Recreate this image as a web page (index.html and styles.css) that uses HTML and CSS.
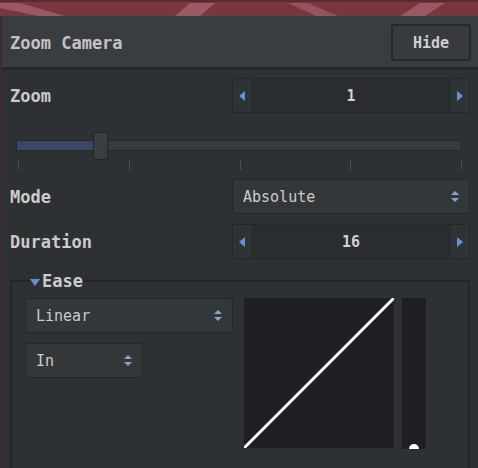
FILE: index.html
```html
<!DOCTYPE html>
<html>
<head>
<meta charset="utf-8">
<link rel="stylesheet" href="styles.css">
</head>
<body>
<div class="banner">
  <svg width="478" height="16" viewBox="0 0 478 16">
    <rect x="0" y="0" width="478" height="16" fill="#7a363d"/>
    <polygon points="0,3 20,3 65,16 38,16 0,8" fill="#9b5864"/>
    <polygon points="190,3 215,3 200,16 175,16" fill="#9c5a65"/>
    <polygon points="288,3 308,3 338,16 316,16" fill="#96525d"/>
    <polygon points="420,3 445,3 425,16 400,16" fill="#9a5863"/>
    <rect x="0" y="0" width="478" height="2" fill="#5c2a30"/>
  </svg>
</div>
<div class="panel">
  <div class="header">
    <span class="title">Zoom Camera</span>
    <button class="btn">Hide</button>
  </div>
  <div class="content">
    <div class="row">
      <span class="label">Zoom</span>
      <div class="spin">
        <span class="spin-arrow"><svg width="6" height="10" viewBox="0 0 6 10"><polygon points="6,0 6,10 0,5" fill="#5e93dc"/></svg></span>
        <span class="spin-value">1</span>
        <span class="spin-arrow"><svg width="6" height="10" viewBox="0 0 6 10"><polygon points="0,0 0,10 6,5" fill="#5e93dc"/></svg></span>
      </div>
    </div>
    <div class="slider">
      <div class="track">
        <div class="fill"></div>
        <div class="handle"></div>
      </div>
      <div class="ticks"><i></i><i></i><i></i><i></i><i></i></div>
    </div>
    <div class="row">
      <span class="label">Mode</span>
      <div class="select">
        <span>Absolute</span>
        <svg class="updown" width="8" height="13" viewBox="0 0 8 13"><polygon points="0,5 4,1 8,5" fill="#8aa4c8"/><polygon points="0,8 4,12 8,8" fill="#8aa4c8"/></svg>
      </div>
    </div>
    <div class="row row-dur">
      <span class="label">Duration</span>
      <div class="spin">
        <span class="spin-arrow"><svg width="6" height="10" viewBox="0 0 6 10"><polygon points="6,0 6,10 0,5" fill="#5e93dc"/></svg></span>
        <span class="spin-value">16</span>
        <span class="spin-arrow"><svg width="6" height="10" viewBox="0 0 6 10"><polygon points="0,0 0,10 6,5" fill="#5e93dc"/></svg></span>
      </div>
    </div>
    <fieldset class="group">
      <legend class="legend"><svg width="10" height="7" viewBox="0 0 10 7"><polygon points="0,0 10,0 5,7" fill="#5e93dc"/></svg>Ease</legend>
      <div class="group-inner">
        <div class="selects">
          <div class="select">
            <span>Linear</span>
            <svg class="updown" width="8" height="13" viewBox="0 0 8 13"><polygon points="0,5 4,1 8,5" fill="#8aa4c8"/><polygon points="0,8 4,12 8,8" fill="#8aa4c8"/></svg>
          </div>
          <div class="select select-small">
            <span>In</span>
            <svg class="updown" width="8" height="13" viewBox="0 0 8 13"><polygon points="0,5 4,1 8,5" fill="#8aa4c8"/><polygon points="0,8 4,12 8,8" fill="#8aa4c8"/></svg>
          </div>
        </div>
        <div class="graph">
          <svg width="150" height="150" viewBox="0 0 150 150"><line x1="0" y1="150" x2="150" y2="0" stroke="#ffffff" stroke-width="3"/></svg>
        </div>
        <div class="bar"><span class="knob"></span></div>
      </div>
    </fieldset>
  </div>
</div>
</body>
</html>
```
FILE: styles.css
```css
* { box-sizing: border-box; }
html, body { margin: 0; padding: 0; }
body {
  width: 478px;
  height: 468px;
  overflow: hidden;
  background: #2d3134;
  font-family: "DejaVu Sans Mono", monospace;
  color: #cacaca;
}
.banner { height: 16px; }
.banner svg { display: block; }
.panel {
  border-left: 2px solid #3b2d31;
  height: 452px;
  background: #2d3134;
}
.header {
  height: 54px;
  background: #393d40;
  border-bottom: 3px solid #25282b;
  display: flex;
  align-items: center;
  justify-content: space-between;
  padding: 2px 7px 0 8px;
}
.title { font-size: 17px; font-weight: bold; color: #c3c3c3; }
.btn {
  width: 80px;
  height: 37px;
  background: #373b3e;
  border: 2px solid #26292c;
  border-radius: 3px;
  color: #cfcfcf;
  font-family: "DejaVu Sans Mono", monospace;
  font-size: 15px;
  font-weight: bold;
  padding: 0;
}
.content { padding: 8px 8px 0 8px; }
.row {
  display: grid;
  grid-template-columns: 1fr 238px;
  align-items: center;
  height: 35px;
}
.label { font-size: 17px; font-weight: bold; color: #cbcbcb; }
.spin {
  height: 35px;
  display: flex;
  align-items: stretch;
  border: 1px solid #24272a;
  border-radius: 2px;
  background: #2a2d30;
}
.spin-arrow {
  width: 18px;
  display: flex;
  align-items: center;
  justify-content: center;
  background: #2f3336;
}
.spin-value {
  flex: 1;
  display: flex;
  align-items: center;
  justify-content: center;
  font-size: 15px;
  font-weight: bold;
  color: #d0d0d0;
}
.slider { padding: 27px 8px 0 6px; height: 66px; }
.track {
  position: relative;
  height: 11px;
  background: #373b3e;
  border: 1px solid #25282b;
  border-radius: 1px;
}
.fill {
  width: 76px;
  height: 100%;
  background: #3b4768;
}
.handle {
  position: absolute;
  left: 76px;
  top: -9px;
  width: 15px;
  height: 28px;
  background: #3a3e41;
  border: 1px solid #232629;
  border-radius: 2px;
}
.ticks {
  display: flex;
  justify-content: space-between;
  padding: 9px 0 0 2px;
}
.ticks i { display: block; width: 1px; height: 10px; background: #4a4e52; }
.select {
  height: 35px;
  display: flex;
  align-items: center;
  justify-content: space-between;
  padding: 0 10px 0 10px;
  background: #33373a;
  border: 1px solid #25282b;
  border-radius: 2px;
  font-size: 15px;
  color: #cbcbcb;
}
.updown { display: block; }
.row-dur { margin-top: 10px; }
.group {
  margin: 12px 0 0 0;
  padding: 0;
  border: 2px solid #24272a;
  height: 200px;
}
.legend {
  margin-left: 18px;
  padding: 0;
  font-size: 17px;
  font-weight: bold;
  color: #cbcbcb;
  display: flex;
  align-items: center;
  gap: 2px;
}
.legend svg { display: block; margin-top: 2px; }
.group-inner {
  display: flex;
  align-items: flex-start;
  padding: 6px 0 0 13px;
}
.selects {
  width: 208px;
  display: flex;
  flex-direction: column;
  align-items: flex-start;
  gap: 10px;
  margin-top: 1px;
}
.selects .select { width: 208px; }
.selects .select-small { width: 118px; }
.graph {
  margin: 1px 0 0 11px;
  width: 150px;
  height: 150px;
  background: #1f2023;
}
.graph svg { display: block; }
.bar {
  position: relative;
  margin: 1px 0 0 8px;
  width: 24px;
  height: 151px;
  background: #1f2023;
}
.knob {
  position: absolute;
  left: 7px;
  bottom: 0;
  width: 10px;
  height: 5px;
  border-radius: 5px 5px 0 0;
  background: #ffffff;
}
```
